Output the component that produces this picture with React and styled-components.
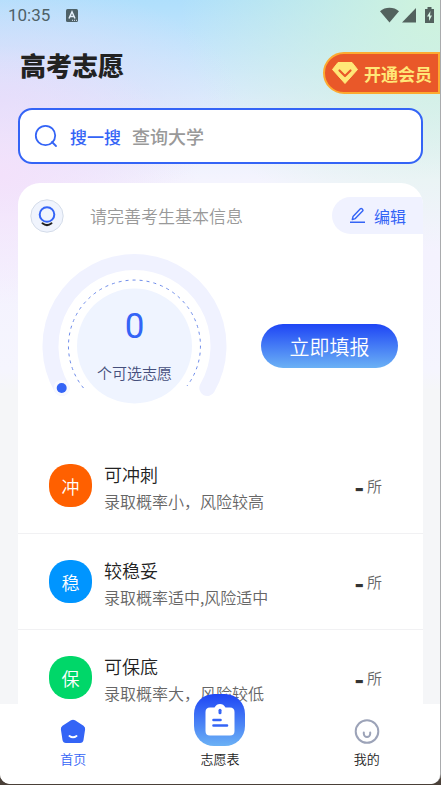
import React from "react";
import styled, { createGlobalStyle } from "styled-components";

const GlobalStyle = createGlobalStyle`
  * {
    box-sizing: border-box;
  }
  body {
    margin: 0;
    overflow: hidden;
    background: #4a4038;
    font-family: "Noto Sans CJK SC", sans-serif;
    color: #333333;
  }
  button,
  input {
    font-family: inherit;
  }
`;

const Screen = styled.div`
  display: flex;
  flex-flow: column nowrap;
  height: calc(100vh - 1px);
  overflow: hidden;
  border-right: 1px solid #a9abad;
  border-radius: 0 0 10px 10px;
  background: radial-gradient(
      ellipse 200px 130px at 0 175px,
      #f3e1fb 0%,
      rgba(243, 225, 251, 0) 100%
    ),
    radial-gradient(
      ellipse 240px 120px at 0 100px,
      #dedcfb 0%,
      rgba(222, 220, 251, 0) 100%
    ),
    radial-gradient(
      ellipse 260px 250px at 100% 0,
      #d0f4dc 0%,
      rgba(208, 244, 220, 0) 100%
    ),
    linear-gradient(
      180deg,
      #afdffc 0,
      #dcebfc 100px,
      #f4f4fe 180px,
      #f4f2fe 260px,
      #f5f5fe 370px,
      #f5f6f8 390px
    );
`;

const StatusBar = styled.div`
  display: flex;
  flex-flow: row nowrap;
  align-items: center;
  flex-shrink: 0;
  height: 30px;
  padding: 0 6px 0 8px;
  color: #4e6168;
`;
const Clock = styled.span`
  font-family: Roboto, sans-serif;
  font-size: 17px;
  flex: 1;
  display: flex;
  align-items: center;
  gap: 16px;
`;
const StatusIcons = styled.div`
  display: flex;
  align-items: center;
  gap: 3px;
  svg:last-child {
    margin-left: 6px;
  }
`;

const Header = styled.header`
  display: flex;
  flex-flow: row nowrap;
  justify-content: space-between;
  align-items: flex-start;
  flex-shrink: 0;
  margin-top: 22px;
  padding-left: 20px;
`;
const Title = styled.h1`
  margin: 0;
  font-size: 26px;
  line-height: 26px;
  font-weight: 900;
  color: #222222;
`;
const VipButton = styled.button`
  display: flex;
  align-items: center;
  gap: 6px;
  height: 42px;
  padding: 0 6px 0 7px;
  border: 2px solid #fdaa30;
  border-radius: 21px 0 0 21px;
  background: #e95829;
  color: #ffe778;
  font-size: 17px;
  font-weight: 700;
`;

const SearchBox = styled.label`
  display: flex;
  align-items: center;
  flex-shrink: 0;
  height: 56px;
  margin: 14px 17px 0 18px;
  padding: 0 14px;
  border: 2px solid #3464f6;
  border-radius: 14px;
  background: #ffffff;
`;
const SearchLabel = styled.span`
  margin: 0 11px 0 12px;
  font-size: 17px;
  font-weight: 500;
  color: #3464f6;
`;
const SearchInput = styled.input`
  flex: 1;
  min-width: 0;
  padding: 0;
  border: none;
  outline: none;
  background: transparent;
  font-size: 18px;
  font-weight: 500;
  &::placeholder {
    color: #999999;
    opacity: 1;
  }
`;

const Content = styled.main`
  flex: 1;
  min-height: 0;
  overflow: hidden;
  margin: 19px 17px 0 18px;
`;
const Card = styled.section`
  overflow: hidden;
  border-radius: 22px;
  background: #ffffff;
`;
const Profile = styled.div`
  display: flex;
  align-items: center;
  padding: 14px 0 0 12px;
`;
const ProfileText = styled.span`
  flex: 1;
  margin-left: 26px;
  font-size: 17px;
  font-weight: 350;
  color: #999999;
`;
const EditButton = styled.button`
  display: flex;
  align-items: center;
  gap: 8px;
  height: 37px;
  padding: 0 17px;
  border: none;
  border-radius: 19px 0 0 19px;
  background: #f0f2ff;
  color: #3464f6;
  font-size: 16px;
`;

const Summary = styled.div`
  display: flex;
  justify-content: space-between;
  align-items: flex-start;
  height: 204px;
  padding: 20px 25px 0 24px;
`;
const Gauge = styled.div`
  display: grid;
  justify-items: center;
  > * {
    grid-area: 1 / 1;
  }
`;
const GaugeText = styled.div`
  display: flex;
  flex-flow: column nowrap;
  align-items: center;
  padding-top: 50px;
`;
const Count = styled.strong`
  font-family: Roboto, sans-serif;
  font-size: 35px;
  line-height: 46px;
  font-weight: 400;
  color: #3464f6;
`;
const CountLabel = styled.span`
  margin-top: 11px;
  font-size: 15px;
  line-height: 24px;
  font-weight: 350;
  color: #454f7c;
`;
const FillButton = styled.button`
  height: 44px;
  width: 137px;
  margin-top: 70px;
  padding: 0;
  border: none;
  border-radius: 22px;
  background: linear-gradient(180deg, #1e45f5 0%, #6bb1f5 100%);
  color: #ffffff;
  font-size: 20px;
  font-weight: 350;
`;

const List = styled.ul`
  margin: 0;
  padding: 0;
  list-style: none;
`;
const Item = styled.li`
  display: flex;
  align-items: center;
  height: 96px;
  padding: 0 41px 0 31px;
  border-bottom: 1px solid #f1f1f3;
`;
const Badge = styled.span`
  display: flex;
  justify-content: center;
  align-items: center;
  width: 43px;
  height: 43px;
  border-radius: 20px;
  background: ${(props) => props.$color};
  color: #ffffff;
  font-size: 18px;
  font-weight: 350;
`;
const ItemBody = styled.div`
  flex: 1;
  margin-left: 12px;
  padding-top: 2px;
`;
const ItemTitle = styled.h2`
  margin: 0;
  font-size: 18px;
  line-height: 28px;
  font-weight: 350;
  color: #222222;
`;
const ItemText = styled.p`
  margin: 0;
  font-size: 16px;
  line-height: 26px;
  font-weight: 350;
  color: #666666;
`;
const Total = styled.span`
  display: flex;
  align-items: center;
  gap: 3px;
  font-size: 15px;
  font-weight: 350;
  color: #666666;
`;
const TotalValue = styled.b`
  font-size: 25px;
  line-height: 30px;
  font-weight: 900;
  color: #333333;
`;

const TabBar = styled.nav`
  display: grid;
  grid-template-columns: repeat(3, 1fr);
  flex-shrink: 0;
  height: 80px;
  background: #ffffff;
`;
const Tab = styled.a`
  display: flex;
  flex-flow: column nowrap;
  align-items: center;
  justify-content: flex-end;
  gap: 5px;
  height: 80px;
  padding-bottom: 15px;
  font-size: 13px;
  line-height: 20px;
  font-weight: 350;
  text-decoration: none;
  color: ${(props) => (props.$active ? "#3464f6" : "#222222")};
`;
/* taller than the bar, so it sticks out over the list */
const TabMain = styled.span`
  display: flex;
  justify-content: center;
  align-items: center;
  flex-shrink: 0;
  position: relative;
  width: 51px;
  height: 52px;
  margin-bottom: -2px;
  border-radius: 20px;
  background: linear-gradient(180deg, #1e45f5 0%, #6bb1f5 100%);
`;

const items = [
  { mark: "冲", color: "#ff6000", title: "可冲刺", text: "录取概率小，风险较高" },
  { mark: "稳", color: "#0095ff", title: "较稳妥", text: "录取概率适中,风险适中" },
  { mark: "保", color: "#00d769", title: "可保底", text: "录取概率大，风险较低" },
];

const AppBadgeIcon = () => (
  <svg width="12" height="13" viewBox="0 0 12 13">
    <rect width="12" height="13" rx="1.5" fill="#4e6168" />
    <path d="M3 9.5 6 2.8 9 9.5M4 7.5h4" fill="none" stroke="#e4effa" strokeWidth="1.5" />
    <path d="M6 11.3h5" stroke="#e4effa" strokeDasharray="1 1" />
  </svg>
);

const WifiIcon = () => (
  <svg width="19" height="16" viewBox="0 0 19 16">
    <path d="M0 4.2C5.300 -.4 13.700 -.4 19 4.200L9.500 15.500z" fill="#53625e" />
  </svg>
);

const SignalIcon = () => (
  <svg width="14" height="15" viewBox="0 0 14 15">
    <path d="M14 0v14.500H0z" fill="#53625e" />
  </svg>
);

const BatteryIcon = () => (
  <svg width="9" height="16" viewBox="0 0 9 16">
    <path d="M2.500 0h4v2H9v14H0V2h2.500z" fill="#53625e" />
    <path d="M5.500 4 2 9.500h2V14l3-5.500H5z" fill="#d5f3e3" />
  </svg>
);

const DiamondIcon = () => (
  <svg width="26" height="22" viewBox="0 0 26 22">
    <path d="M6 .5h14l5.500 7L13 21.500.5 7.500z" fill="#ffe778" stroke="#ffe778" strokeLinejoin="round" />
    <path
      d="M7.500 8.500 13 14l5.500-5.500"
      fill="none"
      stroke="#e95829"
      strokeWidth="2.200"
      strokeLinecap="round"
      strokeLinejoin="round"
    />
  </svg>
);

const SearchIcon = () => (
  <svg width="24" height="24" viewBox="0 0 24 24" fill="none" stroke="#3464f6" strokeWidth="1.800">
    <circle cx="11.500" cy="11.500" r="9.700" />
    <path d="m18 18 4 4" strokeLinecap="round" />
  </svg>
);

const AvatarIcon = () => (
  <svg width="34" height="34" viewBox="0 0 34 34">
    <circle cx="17" cy="17" r="16.200" fill="#f0f4fd" stroke="#d3dbe8" />
    <circle cx="17" cy="15.500" r="7.300" fill="#f0f4fd" stroke="#3464f6" strokeWidth="2" />
    <path d="M12.500 24.300q4.500 3.600 9 0" fill="none" stroke="#222222" strokeWidth="2" strokeLinecap="round" />
  </svg>
);

const PencilIcon = () => (
  <svg width="17" height="17" viewBox="0 0 17 17" fill="none" stroke="#3464f6" strokeWidth="1.400">
    <path d="M4 9.600 11.400 1.800q.8-.7 1.600 0l.6.6q.8.8 0 1.600L6.300 11.600 3.300 12.500z" strokeLinejoin="round" />
    <path d="M1 15.300h15" />
  </svg>
);

const GaugeArc = () => (
  <svg width="185" height="152" viewBox="0 0 185 152" fill="none">
    <path d="M19.700 134A84 84 0 1 1 165.300 134" stroke="#f0f2ff" strokeWidth="16" strokeLinecap="round" />
    <path d="M41.500 134A66 66 0 1 1 145 132" stroke="#6d8bea" strokeDasharray="3 4" />
    <circle cx="92.500" cy="92" r="57.500" fill="#eff4ff" />
    <circle cx="19.700" cy="134" r="8" fill="#f8f9ff" />
    <circle cx="19.700" cy="134" r="5" fill="#3464f6" />
  </svg>
);

const HomeIcon = () => (
  <svg width="26" height="25" viewBox="0 0 26 25">
    <path
      d="M11 1.200q2-1 4 0l8.500 5.500q2 1.500 1.600 3.800l-1.600 10.500q-.5 3-3.500 3H6q-3 0-3.500-3L.9 10.500Q.5 8.200 2.500 6.700z"
      fill="#3464f6"
    />
    <path d="M9.500 17q3.500 2.600 7 0" fill="none" stroke="#ffffff" strokeWidth="2" strokeLinecap="round" />
  </svg>
);

const ClipboardIcon = () => (
  <svg width="30" height="32" viewBox="0 0 30 32">
    <path
      d="M5 3.500h4.500C11 1 12.500 0 15 0s4 1 5.500 3.500H25q4.500 0 4.500 4.500v19q0 4.500-4.500 4.500H5Q.5 31.500.5 27V8Q.5 3.500 5 3.500z"
      fill="#ffffff"
    />
    <path d="M15 6.200v2.600" stroke="#3464f6" strokeWidth="3" strokeLinecap="round" />
    <path d="M8.500 16h7M8.500 21.500h13.500" stroke="#3464f6" strokeWidth="2.600" strokeLinecap="round" />
  </svg>
);

const MineIcon = () => (
  <svg width="26" height="25" viewBox="0 0 26 25" fill="none" stroke="#9ca3b8">
    <circle cx="13" cy="12.500" r="11.300" strokeWidth="2" />
    <path d="M9.800 13.500v1.200a3.200 3.200 0 0 0 6.400 0v-1.200" strokeWidth="2" strokeLinecap="round" />
  </svg>
);

const App = () => {
  return (
    <>
      <GlobalStyle />
      <Screen>
        <StatusBar>
          <Clock>
            10:35
            <AppBadgeIcon />
          </Clock>
          <StatusIcons>
            <WifiIcon />
            <SignalIcon />
            <BatteryIcon />
          </StatusIcons>
        </StatusBar>
        <Header>
          <Title>高考志愿</Title>
          <VipButton type="button">
            <DiamondIcon />
            开通会员
          </VipButton>
        </Header>
        <SearchBox>
          <SearchIcon />
          <SearchLabel>搜一搜</SearchLabel>
          <SearchInput type="text" placeholder="查询大学" />
        </SearchBox>
        <Content>
          <Card>
            <Profile>
              <AvatarIcon />
              <ProfileText>请完善考生基本信息</ProfileText>
              <EditButton type="button">
                <PencilIcon />
                编辑
              </EditButton>
            </Profile>
            <Summary>
              <Gauge>
                <GaugeArc />
                <GaugeText>
                  <Count>0</Count>
                  <CountLabel>个可选志愿</CountLabel>
                </GaugeText>
              </Gauge>
              <FillButton type="button">立即填报</FillButton>
            </Summary>
            <List>
              {items.map((item) => (
                <Item key={item.mark}>
                  <Badge $color={item.color}>{item.mark}</Badge>
                  <ItemBody>
                    <ItemTitle>{item.title}</ItemTitle>
                    <ItemText>{item.text}</ItemText>
                  </ItemBody>
                  <Total>
                    <TotalValue>-</TotalValue>所
                  </Total>
                </Item>
              ))}
            </List>
          </Card>
        </Content>
        <TabBar>
          <Tab href="#home" $active>
            <HomeIcon />
            首页
          </Tab>
          <Tab href="#plan">
            <TabMain>
              <ClipboardIcon />
            </TabMain>
            志愿表
          </Tab>
          <Tab href="#mine">
            <MineIcon />
            我的
          </Tab>
        </TabBar>
      </Screen>
    </>
  );
};

export default App;
